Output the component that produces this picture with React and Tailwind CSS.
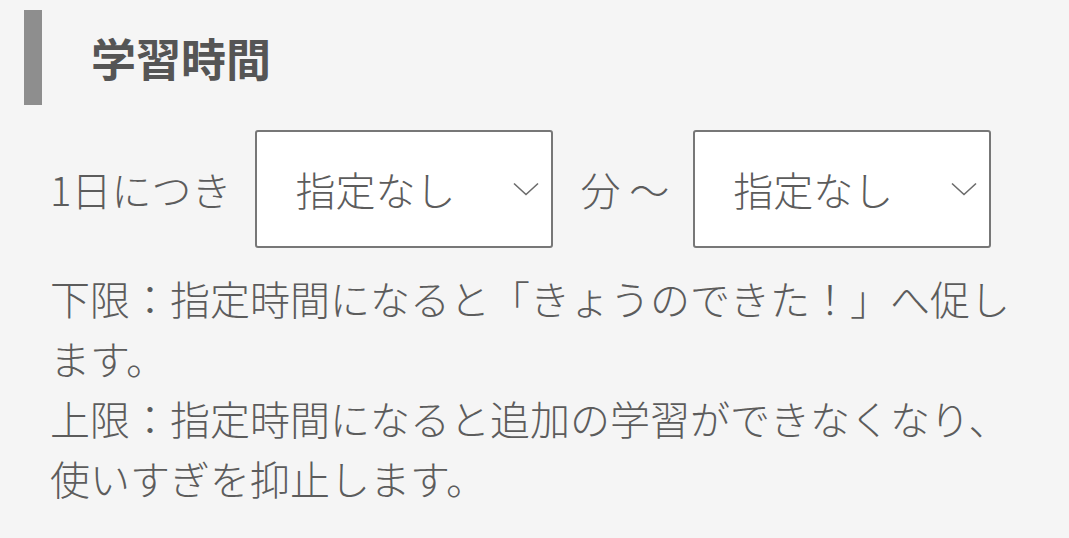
import React from 'react';

const font = { fontFamily: '"Noto Sans CJK JP", "Noto Sans", sans-serif' };

function Chevron() {
  return (
    <svg width="26" height="14" viewBox="0 0 26 14" fill="none" className="shrink-0">
      <path d="M1 1.5 L13 12.5 L25 1.5" stroke="#6b6b6b" strokeWidth="1.6" />
    </svg>
  );
}

function SelectBox({ value }) {
  return (
    <div className="flex items-center justify-between w-[298px] h-[118px] bg-white border-2 border-[#777777] rounded-[3px] pl-[38px] pr-[12px]">
      <span className="text-[40px] leading-none font-light text-[#5c5c5c]">{value}</span>
      <Chevron />
    </div>
  );
}

export default function App() {
  return (
    <div className="w-[1069px] h-[538px] bg-[#f5f5f5] overflow-hidden" style={font}>
      {/* heading */}
      <div className="flex items-center pt-[10px] pl-[24px]">
        <div className="w-[18px] h-[95px] bg-[#8e8e8e]" />
        <h2 className="ml-[49px] text-[45px] font-bold leading-none text-[#555555]">学習時間</h2>
      </div>

      {/* range row */}
      <div className="flex items-center mt-[25px] pl-[50px] text-[40px] font-light text-[#5c5c5c]">
        <span className="leading-none">1日につき</span>
        <div className="ml-[24px]">
          <SelectBox value="指定なし" />
        </div>
        <span className="ml-[27px] leading-none">分 ～</span>
        <div className="ml-[24px]">
          <SelectBox value="指定なし" />
        </div>
      </div>

      {/* notes */}
      <div className="mt-[20px] pl-[50px] w-[1020px] text-[40px] leading-[60px] font-light text-[#5c5c5c]">
        <p>下限：指定時間になると「きょうのできた！」へ促します。</p>
        <p>上限：指定時間になると追加の学習ができなくなり、使いすぎを抑止します。</p>
      </div>
    </div>
  );
}
